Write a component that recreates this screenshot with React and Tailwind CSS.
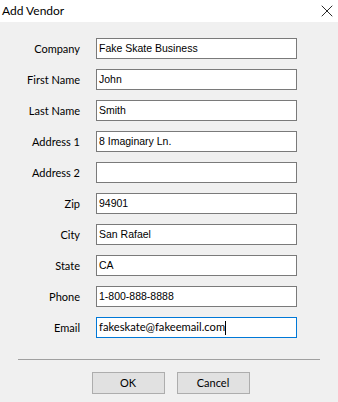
import { X } from 'lucide-react';

const fields = [
  { label: 'Company', value: 'Fake Skate Business' },
  { label: 'First Name', value: 'John' },
  { label: 'Last Name', value: 'Smith' },
  { label: 'Address 1', value: '8 Imaginary Ln.' },
  { label: 'Address 2', value: '' },
  { label: 'Zip', value: '94901' },
  { label: 'City', value: 'San Rafael' },
  { label: 'State', value: 'CA' },
  { label: 'Phone', value: '1-800-888-8888' },
];

export default function App() {
  return (
    <div className="w-[338px] h-[402px] flex flex-col bg-[#f0f0f0] text-[#000] font-['Lato',sans-serif] overflow-hidden">
      {/* title bar */}
      <div className="h-[22px] bg-white flex items-center justify-between pl-[2px] pr-[1px] shrink-0">
        <span className="text-[12px] leading-none">Add Vendor</span>
        <X size={20} strokeWidth={1} className="text-black" />
      </div>

      <div className="flex-1 flex flex-col pt-[16px]">
        <div className="flex flex-col gap-[10px]">
          {fields.map(f => (
            <div key={f.label} className="flex items-center">
              <span className="w-[80px] text-right text-[11px] leading-none">{f.label}</span>
              <div className="ml-[16px] w-[201px] h-[21px] bg-white border border-[#7a7a7a] flex items-center pl-[2px] font-['Liberation_Sans',sans-serif] text-[10.5px]">
                {f.value}
              </div>
            </div>
          ))}
          <div className="flex items-center">
            <span className="w-[80px] text-right text-[11px] leading-none">Email</span>
            <div className="ml-[16px] w-[201px] h-[21px] bg-white border border-[#0078d7] flex items-center pl-[2px] text-[11.2px]">
              <span>fakeskate@fakeemail.com</span>
              <span className="w-[1px] h-[14px] bg-black" />
            </div>
          </div>
        </div>

        <div className="mx-[18px] mt-[21px] h-[1px] bg-[#a0a0a0]" />

        <div className="flex justify-center gap-[12px] mt-[12px] pl-[3px]">
          <button className="w-[73px] h-[22px] bg-[#e1e1e1] border border-[#adadad] text-[11px]">OK</button>
          <button className="w-[73px] h-[22px] bg-[#e1e1e1] border border-[#adadad] text-[11px]">Cancel</button>
        </div>
      </div>
    </div>
  );
}
